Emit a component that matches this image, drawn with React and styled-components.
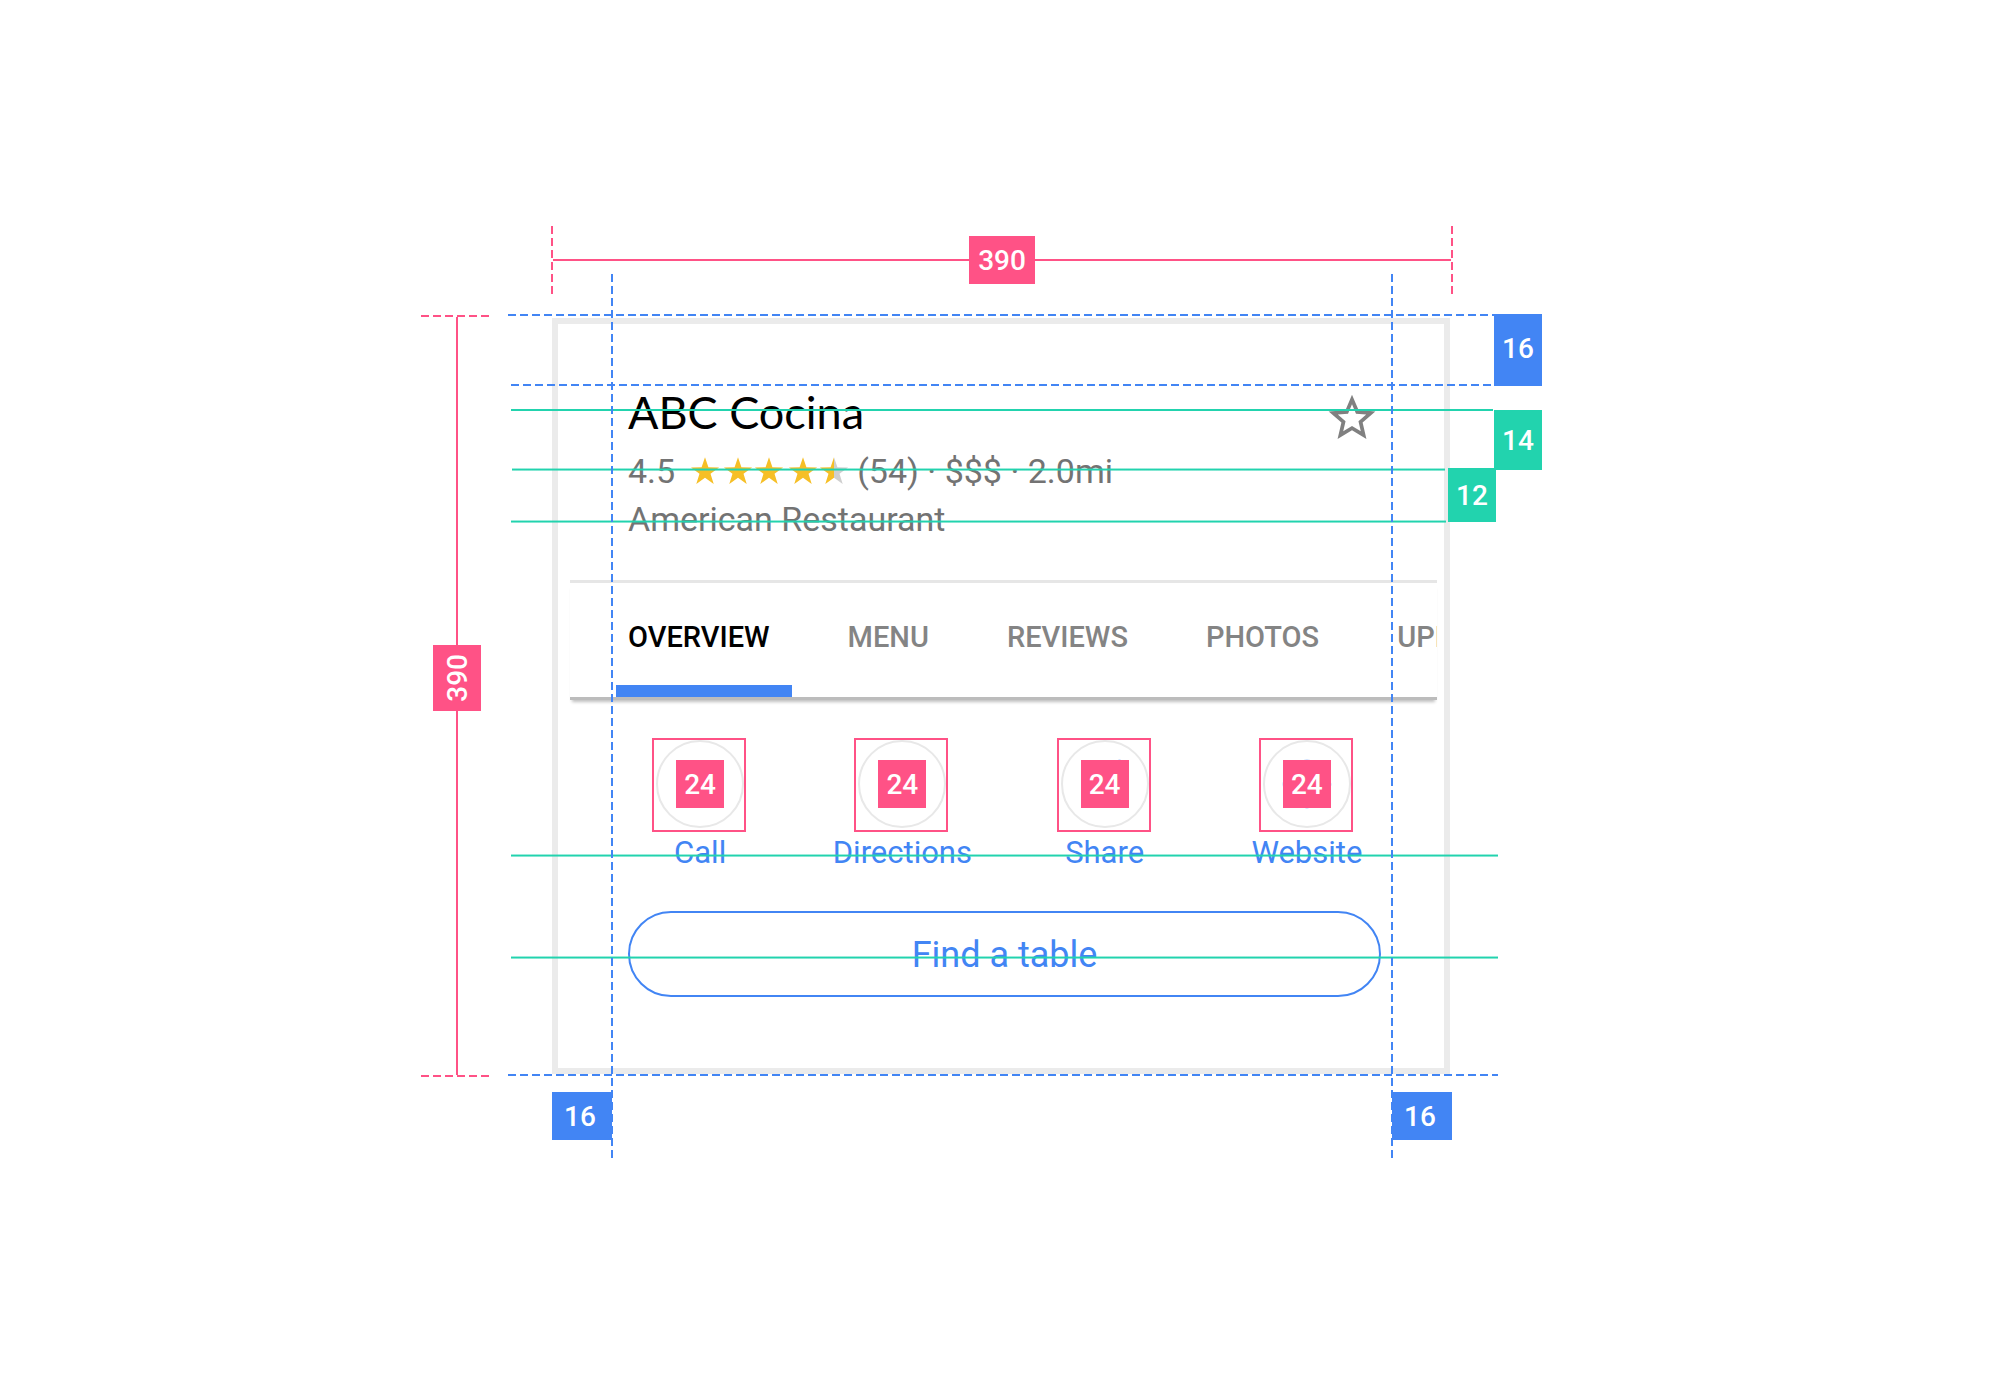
import React from "react";
import styled, { createGlobalStyle, css } from "styled-components";
import { MdDirections, MdLanguage, MdPhone, MdShare, MdStarBorder } from "react-icons/md";

const color = {
  pink: "#ff5286",
  blue: "#4285f4",
  green: "#22d3ae",
  ink: "#000000",
  muted: "#737373",
  tab: "#848484",
  border: "#ebebeb",
  gold: "#f6bf26",
  empty: "#cfcfcf",
};

const GlobalStyle = createGlobalStyle`
  *, *::before, *::after { box-sizing: border-box; }
  body {
    margin: 0;
    background: #ffffff;
    font-family: Roboto, "Liberation Sans", sans-serif;
  }
`;

/* Rulers and tags sit in the grid tracks around the card. */
const Page = styled.main`
  display: grid;
  grid-template-columns: 131px minmax(0, 898px) 131px;
  grid-template-areas:
    ". top ."
    "left card right"
    ". bottom .";
  justify-content: center;
  align-content: start;
  min-height: 100vh;
  padding: 227px 24px 120px;
`;

const CardArea = styled.div`
  grid-area: card;
  position: relative;
`;

const Card = styled.article`
  padding: 62px 7px 71px 12px;
  border: 6px solid ${color.border};
  background: #ffffff;
`;

const Header = styled.header`
  display: flex;
  justify-content: space-between;
  align-items: flex-start;
  padding: 0 57px 37px 58px;
  border-bottom: 3px solid #e6e6e6;
`;

const Title = styled.h1`
  margin: 0 0 9px;
  color: ${color.ink};
  font: 400 45px/52px Lato, "Open Sans", sans-serif;
`;

const Detail = styled.p`
  display: flex;
  align-items: center;
  margin: 0;
  color: ${color.muted};
  font-size: 34px;
  line-height: 48px;
`;

const Rating = styled.svg`
  flex: none;
  width: 158px;
  height: 28px;
  margin: 0 8px 0 16px;
`;

const SaveButton = styled.button`
  display: flex;
  margin: 4px 0 0;
  padding: 0;
  border: 0;
  background: none;
  color: #808080;
  font-size: 56px;
`;

const TabBar = styled.nav`
  border-bottom: 3px solid #bcbcbc;
  box-shadow: 0 4px 3px -2px rgba(0, 0, 0, 0.25);
`;

const TabList = styled.div`
  display: flex;
  gap: 44px;
  overflow: hidden;
  padding-left: 46px;
`;

const Tab = styled.button`
  flex: none;
  height: 114px;
  padding: 6px 22px 0 12px;
  border: 0;
  border-bottom: 12px solid ${(p) => (p.$active ? color.blue : "transparent")};
  background: none;
  color: ${(p) => (p.$active ? color.ink : color.tab)};
  font: 500 29px/36px Roboto, "Liberation Sans", sans-serif;
`;

const Actions = styled.div`
  display: grid;
  grid-template-columns: repeat(4, 1fr);
  padding: 40px 29px;
`;

const Action = styled.a`
  display: flex;
  flex-direction: column;
  align-items: center;
  gap: 7px;
  color: ${color.blue};
  font-size: 31px;
  line-height: 36px;
  text-decoration: none;
`;

const Circle = styled.span`
  position: relative;
  display: flex;
  align-items: center;
  justify-content: center;
  width: 88px;
  height: 88px;
  border: 2px solid #e8e8e8;
  border-radius: 50%;
  font-size: ${(p) => p.$icon}px;
`;

const BookButton = styled.button`
  display: block;
  width: calc(100% - 114px);
  height: 86px;
  margin: 0 56px 0 58px;
  padding: 2px 0 0;
  border: 2px solid ${color.blue};
  border-radius: 43px;
  background: none;
  color: ${color.blue};
  font: 400 36px/42px Roboto, "Liberation Sans", sans-serif;
`;

/* ---- Rulers and tags ---- */

const TopRuler = styled.div`
  grid-area: top;
  display: flex;
  align-items: center;
  height: 66px;
  margin: 0 -3px 25px -1px;
`;

const SideRuler = styled.div`
  grid-area: left;
  display: flex;
  flex-direction: column;
  align-items: center;
  width: 72px;
  margin: -3px 0;
`;

const Tick = styled.span`
  flex: none;
  width: ${(p) => (p.$vertical ? 2 : 68)}px;
  height: ${(p) => (p.$vertical ? 68 : 2)}px;
  align-self: ${(p) => (p.$vertical ? "center" : "flex-start")};
  background: repeating-linear-gradient(
    ${(p) => (p.$vertical ? 180 : 90)}deg,
    ${color.pink} 0 8px,
    transparent 8px 12px
  );
`;

const Rule = styled.span`
  flex: ${(p) => p.$grow || 1};
  min-width: 2px;
  min-height: 2px;
  background: ${color.pink};
`;

const Tag = styled.span`
  flex: none;
  display: flex;
  align-items: center;
  justify-content: center;
  width: ${(p) => p.$w || 48}px;
  height: ${(p) => p.$h || 48}px;
  padding-top: 2px;
  background: ${(p) => p.$color};
  color: #ffffff;
  font-size: 28px;
  font-weight: 500;
  line-height: 32px;
`;

const TallTag = styled(Tag)`
  height: 72px;
  padding: 0 0 2px;
`;

const WideTag = styled(Tag)`
  width: 60px;
  padding-right: 4px;
`;

const UprightTag = styled(Tag)`
  height: 66px;
  padding: 0 0 0 2px;
`;

const Upward = styled.span`
  writing-mode: vertical-rl;
  transform: rotate(180deg);
`;

/* Positioned so that the tags paint above the card's border. */
const SideTags = styled.div`
  grid-area: right;
  position: relative;
  display: flex;
  align-items: flex-start;
  margin: -4px 0 0 -2px;
`;

const InnerTags = styled.div`
  padding-top: 154px;
`;

const OuterTags = styled.div`
  display: grid;
  gap: 24px;
  margin-left: -2px;
`;

const BottomTags = styled.div`
  grid-area: bottom;
  display: flex;
  justify-content: space-between;
  margin: 18px -2px 0 0;
`;

/* ---- Lines and marks drawn over the card ---- */

const overlay = css`
  position: absolute;
  pointer-events: none;
`;

const HLine = styled.span`
  ${overlay}
  left: ${(p) => p.$left}px;
  right: ${(p) => p.$right}px;
  ${(p) => (p.$bottom !== undefined ? `bottom: ${p.$bottom}px` : `top: ${p.$top}px`)};
  height: 2px;
  background: ${(p) =>
    p.$dashed
      ? `repeating-linear-gradient(90deg, ${color.blue} 0 8px, transparent 8px 12px)`
      : color.green};
`;

const SoftLine = styled(HLine)`
  height: 3px;
  background: linear-gradient(
    rgba(34, 211, 174, 0.45) 0 1px,
    ${color.green} 1px 2px,
    rgba(34, 211, 174, 0.55) 2px 3px
  );
`;

/* Spans the card's padding: the dashed left and right borders of one box. */
const PaddingGuides = styled.span`
  ${overlay}
  inset: -44px 57px -85px 59px;
  background:
    repeating-linear-gradient(180deg, ${color.blue} 0 8px, transparent 8px 12px) left / 2px 100% no-repeat,
    repeating-linear-gradient(180deg, ${color.blue} 0 8px, transparent 8px 12px) right / 2px 100% no-repeat;
`;

const Frame = styled.span`
  ${overlay}
  inset: -4px -4px -6px -6px;
  display: flex;
  align-items: center;
  justify-content: center;
  padding: 0 0 2px 2px;
  border: 2px solid ${color.pink};
`;

const starPoints = (cx) =>
  Array.from({ length: 10 }, (_, i) => {
    const r = i % 2 ? 5.8 : 14.8;
    const a = (Math.PI / 5) * i - Math.PI / 2;
    return `${(cx + r * Math.cos(a)).toFixed(2)},${(15 + r * Math.sin(a)).toFixed(2)}`;
  }).join(" ");

function Stars() {
  const centers = [14, 47, 78, 112, 143];
  return (
    <Rating viewBox="0 0 158 28" role="img" aria-label="4.5 out of 5 stars">
      <defs>
        <linearGradient id="half">
          <stop offset="50%" stopColor={color.gold} />
          <stop offset="50%" stopColor={color.empty} />
        </linearGradient>
      </defs>
      {centers.map((cx, i) => (
        <polygon key={cx} points={starPoints(cx)} fill={i === 4 ? "url(#half)" : color.gold} />
      ))}
    </Rating>
  );
}

const tabs = ["OVERVIEW", "MENU", "REVIEWS", "PHOTOS", "UPDATES"];

const actions = [
  { label: "Call", Icon: MdPhone, size: 48 },
  { label: "Directions", Icon: MdDirections, size: 54 },
  { label: "Share", Icon: MdShare, size: 58 },
  { label: "Website", Icon: MdLanguage, size: 58 },
];

export default function App() {
  return (
    <>
      <GlobalStyle />
      <Page>
        <TopRuler>
          <Tick $vertical />
          <Rule />
          <Tag $color={color.pink} $w={66}>390</Tag>
          <Rule />
          <Tick $vertical />
        </TopRuler>

        <SideRuler>
          <Tick />
          <Rule $grow={9} />
          <UprightTag $color={color.pink}>
            <Upward>390</Upward>
          </UprightTag>
          <Rule $grow={10} />
          <Tick />
        </SideRuler>

        <CardArea>
          <Card>
            <Header>
              <div>
                <Title>ABC Cocina</Title>
                <Detail>
                  4.5
                  <Stars />
                  (54) · $$$ · 2.0mi
                </Detail>
                <Detail>American Restaurant</Detail>
              </div>
              <SaveButton type="button" aria-label="Save">
                <MdStarBorder />
              </SaveButton>
            </Header>

            <TabBar>
              <TabList role="tablist">
                {tabs.map((name, i) => (
                  <Tab key={name} type="button" role="tab" aria-selected={i === 0} $active={i === 0}>
                    {name}
                  </Tab>
                ))}
              </TabList>
            </TabBar>

            <Actions>
              {actions.map(({ label, Icon, size }) => (
                <Action key={label} href={`#${label.toLowerCase()}`}>
                  <Circle $icon={size}>
                    <Icon aria-hidden="true" />
                    <Frame>
                      <Tag $color={color.pink}>24</Tag>
                    </Frame>
                  </Circle>
                  {label}
                </Action>
              ))}
            </Actions>

            <BookButton type="button">Find a table</BookButton>
          </Card>

          <HLine $top={91} $left={-41} $right={-43} />
          <SoftLine $top={150} $left={-40} $right={5} />
          <SoftLine $top={202} $left={-41} $right={4} />
          <SoftLine $top={536} $left={-41} $right={-48} />
          <SoftLine $top={638} $left={-41} $right={-48} />
          <HLine $dashed $top={-4} $left={-44} $right={-44} />
          <HLine $dashed $top={66} $left={-41} $right={-42} />
          <HLine $dashed $bottom={-2} $left={-44} $right={-48} />
          <PaddingGuides />
        </CardArea>

        <SideTags>
          <InnerTags>
            <Tag $color={color.green} $h={54}>12</Tag>
          </InnerTags>
          <OuterTags>
            <TallTag $color={color.blue}>16</TallTag>
            <Tag $color={color.green} $h={60}>14</Tag>
          </OuterTags>
        </SideTags>

        <BottomTags>
          <WideTag $color={color.blue}>16</WideTag>
          <WideTag $color={color.blue}>16</WideTag>
        </BottomTags>
      </Page>
    </>
  );
}
